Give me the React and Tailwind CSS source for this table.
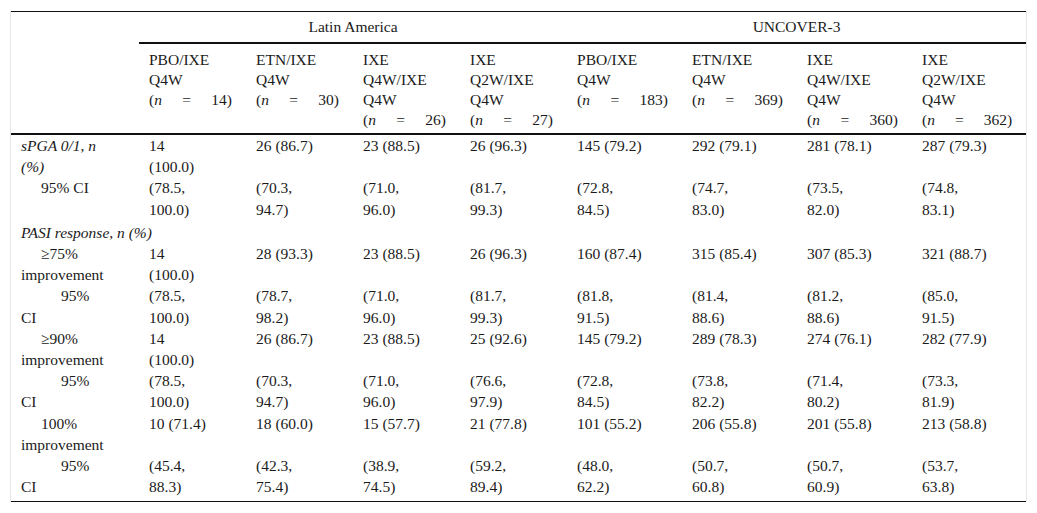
const groups = [
  { label: 'PBO/IXE', lines: ['Q4W'], n: '14' },
  { label: 'ETN/IXE', lines: ['Q4W'], n: '30' },
  { label: 'IXE', lines: ['Q4W/IXE', 'Q4W'], n: '26' },
  { label: 'IXE', lines: ['Q2W/IXE', 'Q4W'], n: '27' },
  { label: 'PBO/IXE', lines: ['Q4W'], n: '183' },
  { label: 'ETN/IXE', lines: ['Q4W'], n: '369' },
  { label: 'IXE', lines: ['Q4W/IXE', 'Q4W'], n: '360' },
  { label: 'IXE', lines: ['Q2W/IXE', 'Q4W'], n: '362' },
]

const rows = [
  {
    head: <span className="italic">sPGA 0/1, n<br />(%)</span>,
    cells: [['14', '(100.0)'], ['26 (86.7)'], ['23 (88.5)'], ['26 (96.3)'], ['145 (79.2)'], ['292 (79.1)'], ['281 (78.1)'], ['287 (79.3)']],
  },
  {
    head: '95% CI', indent: 'indent-5',
    cells: [['(78.5,', '100.0)'], ['(70.3,', '94.7)'], ['(71.0,', '96.0)'], ['(81.7,', '99.3)'], ['(72.8,', '84.5)'], ['(74.7,', '83.0)'], ['(73.5,', '82.0)'], ['(74.8,', '83.1)']],
  },
  { head: <span className="italic">PASI response, n (%)</span>, span: true },
  {
    head: <>≥75%<br />improvement</>, indent: 'indent-5',
    cells: [['14', '(100.0)'], ['28 (93.3)'], ['23 (88.5)'], ['26 (96.3)'], ['160 (87.4)'], ['315 (85.4)'], ['307 (85.3)'], ['321 (88.7)']],
  },
  {
    head: <>95%<br />CI</>, indent: 'indent-10',
    cells: [['(78.5,', '100.0)'], ['(78.7,', '98.2)'], ['(71.0,', '96.0)'], ['(81.7,', '99.3)'], ['(81.8,', '91.5)'], ['(81.4,', '88.6)'], ['(81.2,', '88.6)'], ['(85.0,', '91.5)']],
  },
  {
    head: <>≥90%<br />improvement</>, indent: 'indent-5',
    cells: [['14', '(100.0)'], ['26 (86.7)'], ['23 (88.5)'], ['25 (92.6)'], ['145 (79.2)'], ['289 (78.3)'], ['274 (76.1)'], ['282 (77.9)']],
  },
  {
    head: <>95%<br />CI</>, indent: 'indent-10',
    cells: [['(78.5,', '100.0)'], ['(70.3,', '94.7)'], ['(71.0,', '96.0)'], ['(76.6,', '97.9)'], ['(72.8,', '84.5)'], ['(73.8,', '82.2)'], ['(71.4,', '80.2)'], ['(73.3,', '81.9)']],
  },
  {
    head: <>100%<br />improvement</>, indent: 'indent-5',
    cells: [['10 (71.4)'], ['18 (60.0)'], ['15 (57.7)'], ['21 (77.8)'], ['101 (55.2)'], ['206 (55.8)'], ['201 (55.8)'], ['213 (58.8)']],
  },
  {
    head: <>95%<br />CI</>, indent: 'indent-10', last: true,
    cells: [['(45.4,', '88.3)'], ['(42.3,', '75.4)'], ['(38.9,', '74.5)'], ['(59.2,', '89.4)'], ['(48.0,', '62.2)'], ['(50.7,', '60.8)'], ['(50.7,', '60.9)'], ['(53.7,', '63.8)']],
  },
]

const widths = ['w-[128px]', 'w-[107px]', 'w-[107px]', 'w-[107px]', 'w-[107px]', 'w-[115px]', 'w-[115px]', 'w-[115px]', 'w-[114px]']

export default function App() {
  return (
    <div className="bg-white min-h-[513px] pt-[11px]">
      <div className="ml-[10px] w-[1017px] border-x border-[#e6e6e6]">
        <table
          className="w-[1015px] table-fixed border-collapse border-t border-b border-[#111] text-[15.5px] text-[#1a1a1a]"
          style={{ fontFamily: '"Liberation Serif", "Times New Roman", serif' }}
        >
          <colgroup>
            {widths.map((w, i) => <col key={i} className={w} />)}
          </colgroup>
          <thead>
            <tr>
              <th rowSpan={2} className="border-b-2 border-[#111]"></th>
              <th colSpan={4} className="font-normal leading-[20px] pt-[5px] pb-[5px] border-b-2 border-[#111]">Latin America</th>
              <th colSpan={4} className="font-normal leading-[20px] pt-[5px] pb-[5px] border-b-2 border-[#111]">UNCOVER-3</th>
            </tr>
            <tr>
              {groups.map((g, i) => (
                <th key={i} className="font-normal text-left align-top leading-[20px] pl-[10px] pr-[14px] pt-[6px] pb-[3px] border-b-2 border-[#111]">
                  <div>{g.label}</div>
                  {g.lines.map((l, j) => <div key={j}>{l}</div>)}
                  <div className="text-justify [text-align-last:justify]">
                    (<span className="italic">n</span> = {g.n})
                  </div>
                </th>
              ))}
            </tr>
          </thead>
          <tbody>
            {rows.map((r, i) => {
              const pad = r.last ? 'pb-[4px]' : r.span ? 'pt-[2px]' : ''
              return (
                <tr key={i}>
                  <td colSpan={r.span ? 9 : 1} className={`align-top leading-[21.2px] pl-[10px] pr-[14px] ${pad} ${r.indent || ''}`}>
                    {r.head}
                  </td>
                  {!r.span && r.cells.map((c, j) => (
                    <td key={j} className={`align-top leading-[21.2px] pl-[10px] pr-[14px] ${pad}`}>
                      {c.map((l, k) => <div key={k}>{l}</div>)}
                    </td>
                  ))}
                </tr>
              )
            })}
          </tbody>
        </table>
      </div>
    </div>
  )
}
